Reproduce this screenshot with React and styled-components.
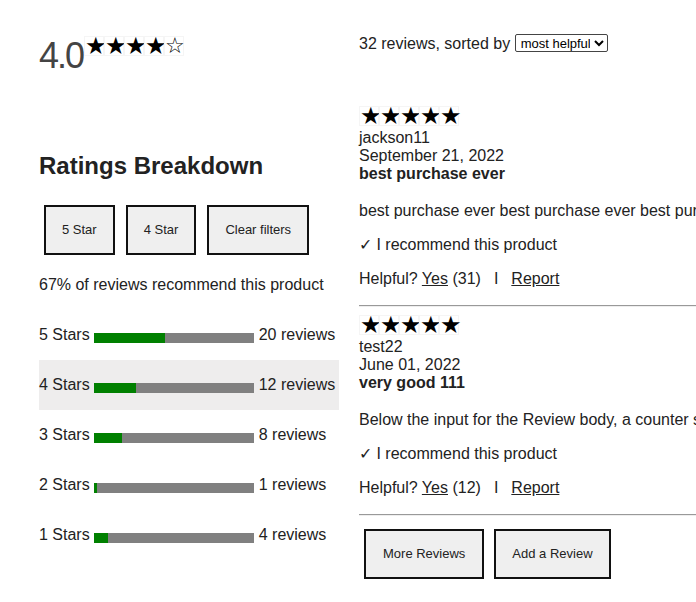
import React from "react";
import styled, { createGlobalStyle } from "styled-components";

const GlobalStyle = createGlobalStyle`
  body {
    margin: 0;
    font-family: "Liberation Sans", Arial, sans-serif;
    color: #222;
    background: #fff;
    overflow: hidden;
  }
`;

const breakdown = [
  { stars: 5, count: 20 },
  { stars: 4, count: 12 },
  { stars: 3, count: 8 },
  { stars: 2, count: 1 },
  { stars: 1, count: 4 },
];

const reviews = [
  {
    id: 1,
    rating: 5,
    user: "jackson11",
    date: "September 21, 2022",
    summary: "best purchase ever",
    body: "best purchase ever best purchase ever best purchase ever best purchase ever",
    helpful: 31,
  },
  {
    id: 2,
    rating: 5,
    user: "test22",
    date: "June 01, 2022",
    summary: "very good 111",
    body: "Below the input for the Review body, a counter should appear letting the user know",
    helpful: 12,
  },
];

const Stars = ({ rating }) => (
  <StarRow>
    {[1, 2, 3, 4, 5].map((n) => (
      <Star key={n} empty={n > rating}>
        {n <= rating ? "★" : "☆"}
      </Star>
    ))}
  </StarRow>
);

const App = () => {
  const total = breakdown.reduce((sum, b) => sum + b.count, 0);

  return (
    <Page>
      <GlobalStyle />
      <LeftCol>
        <OverallRow>
          <Average>4.0</Average>
          <Stars rating={4} />
        </OverallRow>

        <Heading>Ratings Breakdown</Heading>

        <FilterRow>
          <Button>5 Star</Button>
          <Button>4 Star</Button>
          <Button>Clear filters</Button>
        </FilterRow>

        <RecommendSummary>67% of reviews recommend this product</RecommendSummary>

        <Breakdown>
          {breakdown.map((b) => (
            <BreakdownRow key={b.stars} active={b.stars === 4}>
              <RowLabel>{b.stars} Stars</RowLabel>
              <Bar>
                <Fill style={{ width: `${(b.count / total) * 100}%` }} />
              </Bar>
              <RowCount>{b.count} reviews</RowCount>
            </BreakdownRow>
          ))}
        </Breakdown>
      </LeftCol>

      <RightCol>
        <SortLine>
          32 reviews, sorted by{" "}
          <SortSelect defaultValue="helpful">
            <option value="helpful">most helpful</option>
            <option value="newest">newest</option>
            <option value="relevant">relevant</option>
          </SortSelect>
        </SortLine>

        <ReviewList>
          {reviews.map((r) => (
            <Review key={r.id}>
              <Stars rating={r.rating} />
              <ReviewMeta>{r.user}</ReviewMeta>
              <ReviewMeta>{r.date}</ReviewMeta>
              <Summary>{r.summary}</Summary>
              <Body>{r.body}</Body>
              <Line>✓ I recommend this product</Line>
              <Line>
                Helpful? <Link>Yes</Link> ({r.helpful})
                <Separator>I</Separator>
                <Link>Report</Link>
              </Line>
              <Divider />
            </Review>
          ))}
        </ReviewList>

        <ActionRow>
          <Button wide>More Reviews</Button>
          <Button>Add a Review</Button>
        </ActionRow>
      </RightCol>
    </Page>
  );
};

const Page = styled.div`
  display: flex;
  gap: 20px;
  padding: 34px 0 0 39px;
`;

const LeftCol = styled.div`
  width: 300px;
  flex: none;
  padding-top: 2px;
`;

const OverallRow = styled.div`
  display: flex;
  align-items: flex-start;
`;

const Average = styled.div`
  font-size: 36px;
  line-height: 40px;
  color: #444;
  letter-spacing: -2px;
  margin-right: 1px;
`;

const StarRow = styled.div`
  display: flex;
  height: 20px;
`;

const Star = styled.span`
  box-sizing: border-box;
  width: 20px;
  height: 20px;
  border: 1px solid #f5f5f5;
  font-family: "DejaVu Sans", sans-serif;
  font-size: ${(props) => (props.empty ? "22px" : "24px")};
  line-height: 18px;
  text-align: center;
  color: #000;
  overflow: visible;
`;

const Heading = styled.h2`
  margin: 76px 0 0;
  font-size: 24px;
  line-height: 28px;
  font-weight: bold;
`;

const FilterRow = styled.div`
  display: flex;
  gap: 11px;
  margin: 25px 0 0 5px;
`;

const Button = styled.button`
  font-family: "Liberation Sans", Arial, sans-serif;
  font-size: 13px;
  line-height: 15px;
  color: #222;
  background: #efefef;
  border: 2px solid #111;
  padding: 15px ${(props) => (props.wide ? "17px" : "16px")} 16px;
  cursor: pointer;
`;

const RecommendSummary = styled.p`
  margin: 21px 0 0;
  font-size: 16px;
  line-height: 18px;
`;

const Breakdown = styled.div`
  margin-top: 16px;
`;

const BreakdownRow = styled.div`
  display: flex;
  align-items: center;
  height: 50px;
  font-size: 16px;
  background: ${(props) => (props.active ? "#eeeded" : "transparent")};
`;

const RowLabel = styled.span`
  margin-right: 4px;
`;

const Bar = styled.div`
  width: 160px;
  height: 10px;
  margin-top: 6px;
  background: #808080;
  display: flex;
`;

const Fill = styled.div`
  background: #008000;
  height: 100%;
`;

const RowCount = styled.span`
  margin-left: 5px;
`;

const RightCol = styled.div`
  flex: 1;
  min-width: 0;
`;

const SortLine = styled.div`
  font-size: 16px;
  line-height: 18px;
  white-space: nowrap;
`;

const SortSelect = styled.select`
  font-family: "Liberation Sans", Arial, sans-serif;
  font-size: 13px;
  height: 18px;
  width: 93px;
  padding: 0 1px;
  vertical-align: 1px;
  border: 1px solid #444;
  border-radius: 2px;
  background: #fff;
  color: #000;
`;

const ReviewList = styled.div`
  margin-top: 53px;
`;

const Review = styled.div`
  & + & {
    margin-top: 8px;
  }

  & > ${StarRow} {
    margin-bottom: 3px;
  }
`;

const ReviewMeta = styled.div`
  font-size: 16px;
  line-height: 18px;
`;

const Summary = styled(ReviewMeta)`
  font-weight: bold;
`;

const Body = styled.p`
  margin: 19px 0 0;
  font-size: 16px;
  line-height: 18px;
  white-space: nowrap;
  overflow: hidden;
`;

const Line = styled.p`
  margin: 16px 0 0;
  font-size: 16px;
  line-height: 18px;
  white-space: nowrap;
`;

const Link = styled.span`
  text-decoration: underline;
  cursor: pointer;
`;

const Separator = styled.span`
  margin: 0 13px;
`;

const Divider = styled.div`
  margin-top: 17px;
  border-top: 1px solid #999;
  border-bottom: 1px solid #eee;
`;

const ActionRow = styled.div`
  display: flex;
  gap: 10px;
  margin: 13px 0 0 5px;
`;

export default App;
